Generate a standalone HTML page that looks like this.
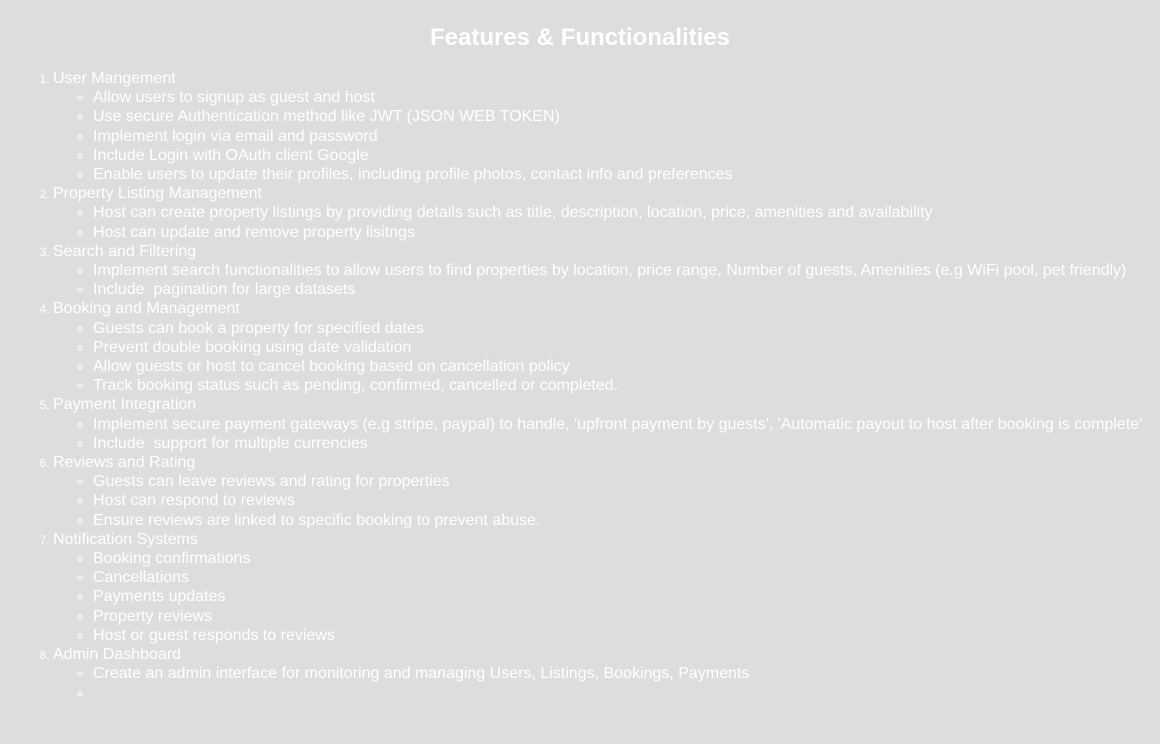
<!DOCTYPE html>
<html><head><meta charset="utf-8"><style>
html,body{margin:0;background:#dddddd;}
body{font-family:"Liberation Sans",sans-serif;color:#fff;font-size:16px;line-height:19.2px;width:1160px;height:720px;overflow:hidden;}
h1{font-size:24px;line-height:28px;text-align:center;margin:24px 0 17px;font-weight:bold;}
ol{margin:0;padding-left:53px;}
ol>li::marker{font-size:12px;}
ul{margin:0;padding-left:40px;list-style:circle;}
ul li::marker{font-size:13px;}
li{white-space:nowrap;}
</style></head><body>
<h1>Features &amp; Functionalities</h1>
<ol>
<li>User Mangement<ul>
<li>Allow users to signup as guest and host</li>
<li>Use secure Authentication method like JWT (JSON WEB TOKEN)</li>
<li>Implement login via email and password</li>
<li>Include Login with OAuth client Google</li>
<li>Enable users to update their profiles, including profile photos, contact info and preferences</li></ul></li>
<li>Property Listing Management<ul>
<li>Host can create property listings by providing details such as title, description, location, price, amenities and availability</li>
<li>Host can update and remove property lisitngs</li></ul></li>
<li>Search and Filtering<ul>
<li>Implement search functionalities to allow users to find properties by location, price range, Number of guests, Amenities (e.g WiFi pool, pet friendly)</li>
<li>Include&nbsp; pagination for large datasets</li></ul></li>
<li>Booking and Management<ul>
<li>Guests can book a property for specified dates</li>
<li>Prevent double booking using date validation</li>
<li>Allow guests or host to cancel booking based on cancellation policy</li>
<li>Track booking status such as pending, confirmed, cancelled or completed.</li></ul></li>
<li>Payment Integration<ul>
<li>Implement secure payment gateways (e.g stripe, paypal) to handle, 'upfront payment by guests', 'Automatic payout to host after booking is complete'</li>
<li>Include&nbsp; support for multiple currencies</li></ul></li>
<li>Reviews and Rating<ul>
<li>Guests can leave reviews and rating for properties</li>
<li>Host can respond to reviews</li>
<li>Ensure reviews are linked to specific booking to prevent abuse.</li></ul></li>
<li>Notification Systems<ul>
<li>Booking confirmations</li>
<li>Cancellations</li>
<li>Payments updates</li>
<li>Property reviews</li>
<li>Host or guest responds to reviews</li></ul></li>
<li>Admin Dashboard<ul>
<li>Create an admin interface for monitoring and managing Users, Listings, Bookings, Payments</li>
<li>&nbsp;</li></ul></li>
</ol>
</body></html>
